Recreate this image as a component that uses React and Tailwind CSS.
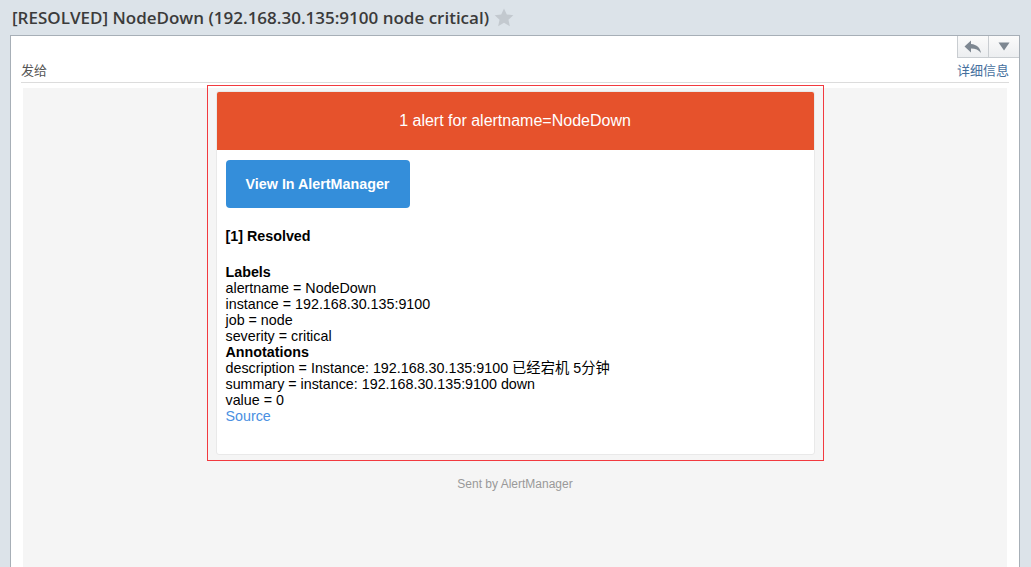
import React from 'react';

const labels = [
  'alertname = NodeDown',
  'instance = 192.168.30.135:9100',
  'job = node',
  'severity = critical',
];

const annotations = [
  'description = Instance: 192.168.30.135:9100 已经宕机 5分钟',
  'summary = instance: 192.168.30.135:9100 down',
  'value = 0',
];

function Star() {
  return (
    <svg width="20" height="19" viewBox="0 0 24 23" className="ml-[5px]">
      <path
        d="M12 0.5l3.4 7.3 7.9 0.9-5.9 5.4 1.7 7.9L12 18 4.9 22l1.7-7.9L0.7 8.7l7.9-0.9z"
        fill="#c3c9cf"
      />
    </svg>
  );
}

function ReplyButtons() {
  return (
    <div className="flex h-[22px] border border-[#c9cdd1] border-r-0 border-t-0 bg-gradient-to-b from-[#fbfbfb] to-[#eceef0]">
      <div className="w-[31px] flex items-center justify-center border-r border-[#c9cdd1]">
        <svg width="18" height="14" viewBox="0 0 18 14">
          <path d="M7 0.5L0.5 6.5 7 12.5V8.5c4.5 0 7.5 1.2 10 4.5-0.8-5-4-8.5-10-9z" fill="#7d8791" />
        </svg>
      </div>
      <div className="w-[30px] flex items-center justify-center">
        <svg width="12" height="9" viewBox="0 0 12 9">
          <path d="M0.5 0.5h11L6 8.5z" fill="#7d8791" />
        </svg>
      </div>
    </div>
  );
}

export default function App() {
  return (
    <div
      className="w-[1031px] h-[567px] overflow-hidden bg-[#dce3e9] flex flex-col"
      style={{ fontFamily: '"Liberation Sans", Arial, "Noto Sans CJK SC", sans-serif' }}
    >
      {/* subject bar */}
      <div className="h-[35px] shrink-0 flex items-center pl-[12px]">
        <span
          className="text-[17px] font-semibold text-[#3b3b3b]"
          style={{ fontFamily: '"Open Sans", "Noto Sans", sans-serif' }}
        >
          [RESOLVED] NodeDown (192.168.30.135:9100 node critical)
        </span>
        <Star />
      </div>

      {/* mail panel */}
      <div className="flex-1 ml-[10px] mr-[11px] bg-white border border-[#a7afb7] border-b-0 flex flex-col min-h-0">
        <div className="flex justify-end">
          <ReplyButtons />
        </div>
        <div
          className="mx-[10px] h-[25px] pt-[2px] flex items-start justify-between border-b border-[#dcdcdc] text-[13px]"
          style={{ fontFamily: '"Noto Sans CJK SC", "Liberation Sans", sans-serif' }}
        >
          <span className="text-[#555] leading-[20px]">发给</span>
          <span className="text-[#46709e] leading-[20px]">详细信息</span>
        </div>

        {/* message body */}
        <div className="flex-1 mx-[12px] mt-[5px] bg-[#f5f5f5] flex flex-col items-center">
          <div className="-mt-[3px] w-[617px] border border-solid border-[#f23a3f] pt-[5px] pb-[5px] pl-[8px] pr-[8px]">
            <div className="w-[599px] border border-[#e9e9e9] rounded-[3px] bg-white overflow-hidden">
              <div className="h-[58px] bg-[#e6522c] flex items-center justify-center text-white text-[16px]">
                1 alert for alertname=NodeDown
              </div>
              <div className="px-[9px] pt-[10px] pb-[30px] text-[14.3px] leading-[16px] text-black">
                <div className="w-[184px] h-[48px] rounded-[4px] bg-[#348eda] flex items-center justify-center text-white font-bold">
                  View In AlertManager
                </div>
                <div className="mt-[20px] font-bold">[1] Resolved</div>
                <div className="mt-[20px] font-bold">Labels</div>
                {labels.map((l) => (
                  <div key={l}>{l}</div>
                ))}
                <div className="font-bold">Annotations</div>
                {annotations.map((a) => (
                  <div key={a}>{a}</div>
                ))}
                <div className="text-[#4a90e2]">Source</div>
              </div>
            </div>
          </div>
          <div className="mt-[14px] text-[12px] text-[#999]">Sent by AlertManager</div>
        </div>
      </div>
    </div>
  );
}
